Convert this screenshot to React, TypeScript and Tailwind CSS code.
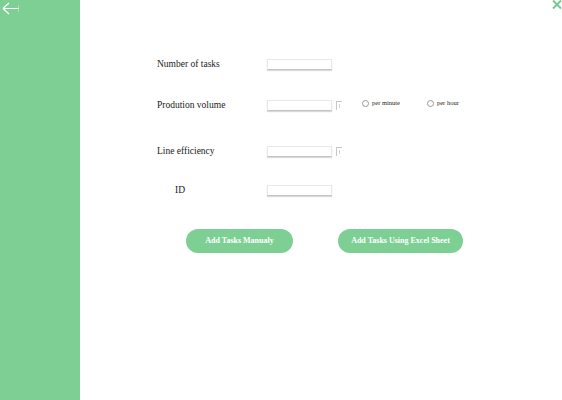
const serif = "font-['Book_Antiqua','Palatino_Linotype','Liberation_Serif',serif]";

const Field = () => (
  <div className="w-[65px] h-[11px] bg-white border border-[#e8e8e8] border-b-[#c4c4c4] shadow-[0_1px_1px_rgba(0,0,0,0.15)]" />
);

const Hint = () => (
  <div className="ml-[4px] w-[6px] h-[9px] border-l border-t border-[#c8c8c8] flex justify-center pt-[2px]">
    <div className="w-px h-[4px] bg-[#b9e3c5]" />
  </div>
);

const Radio = ({ label }: { label: string }) => (
  <label className="flex items-center gap-[3px]">
    <span className="w-[7px] h-[7px] rounded-full border border-[#999] bg-white" />
    <span className="text-[6.5px] text-[#222]">{label}</span>
  </label>
);

const App = () => (
  <div className={`flex w-[562px] h-[400px] bg-white ${serif}`}>
    {/* Sidebar */}
    <aside className="w-[80px] h-full bg-[#7ecf94] shrink-0">
      <svg width="20" height="16" viewBox="0 0 20 16" className="mt-[1px] ml-[1px]">
        <path d="M2 7.5 H17.5 M2 7.5 L8 2 M2 7.5 L8 13" stroke="white" strokeWidth="1.2" fill="none" />
        <path d="M17.5 4 V11" stroke="rgba(255,255,255,0.4)" strokeWidth="0.8" />
      </svg>
    </aside>

    {/* Main */}
    <main className="relative flex-1 pl-[77px] pt-[59px] text-[9.5px] text-[#1a1a1a]">
      <svg width="10" height="10" viewBox="0 0 10 10" className="absolute top-0 right-0">
        <path d="M1 0.5 L9 8.5 M9 0.5 L1 8.5" stroke="#74c98b" strokeWidth="1.9" />
      </svg>

      <div className="flex items-center h-[11px]">
        <span className="w-[110px]">Number of tasks</span>
        <Field />
      </div>

      <div className="flex items-center h-[11px] mt-[30px]">
        <span className="w-[110px]">Prodution volume</span>
        <Field />
        <Hint />
        <div className="ml-[20px] -mt-[5px] flex items-center gap-[27px]">
          <Radio label="per minute" />
          <Radio label="per hour" />
        </div>
      </div>

      <div className="flex items-center h-[11px] mt-[35px]">
        <span className="w-[110px]">Line efficiency</span>
        <Field />
        <Hint />
      </div>

      <div className="flex items-center h-[11px] mt-[28px]">
        <span className="w-[110px] pl-[18px]">ID</span>
        <Field />
      </div>

      <div className="flex mt-[33px] pl-[29px] gap-[45px]">
        <button className="w-[107px] h-[24px] rounded-full bg-[#7ecf94] text-white text-[8px] font-bold">
          Add Tasks Manualy
        </button>
        <button className="w-[125px] h-[24px] rounded-full bg-[#7ecf94] text-white text-[8px] font-bold">
          Add Tasks Using Excel Sheet
        </button>
      </div>
    </main>
  </div>
);

export default App;
